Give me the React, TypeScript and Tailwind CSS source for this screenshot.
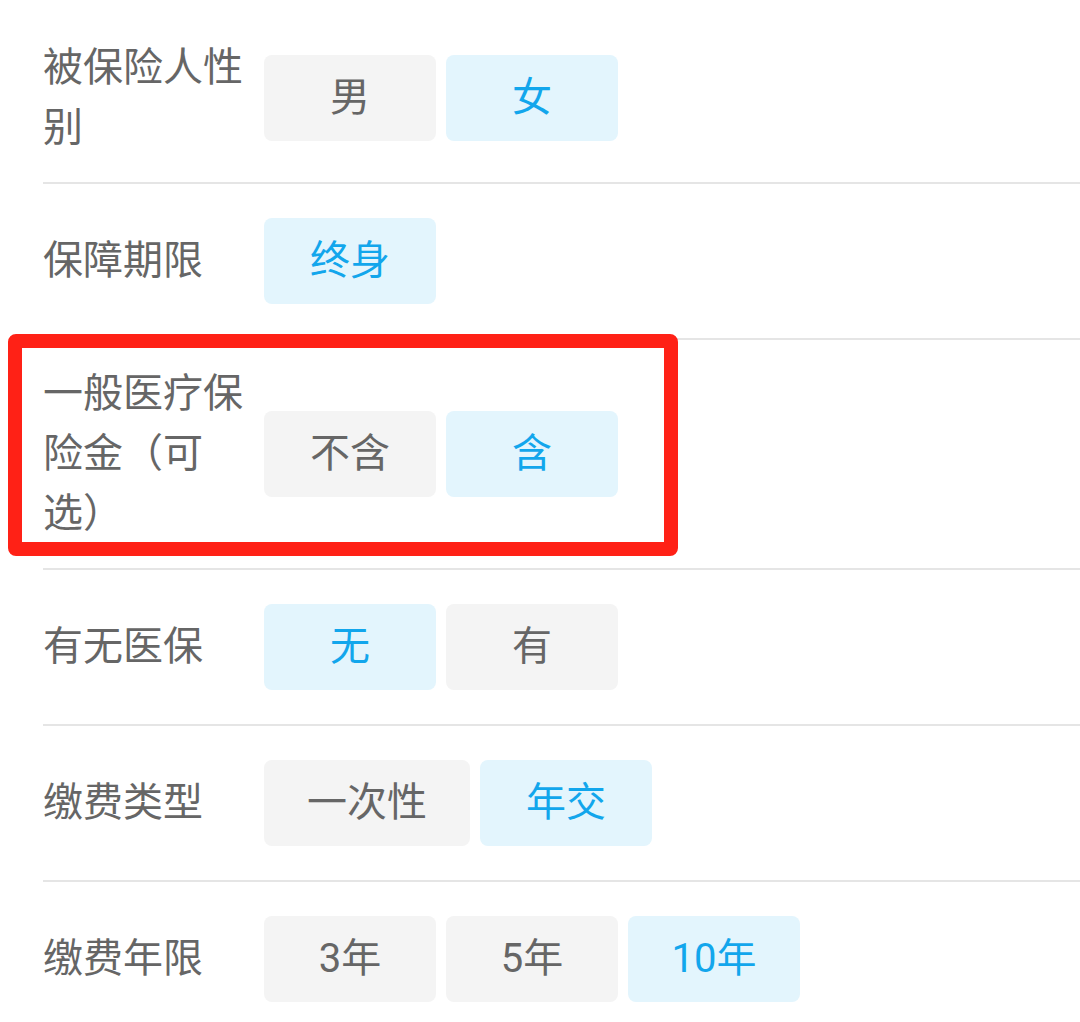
import React from "react";

type Row = { label: string; options: string[]; selected: number };

const rows: Row[] = [
  { label: "被保险人性别", options: ["男", "女"], selected: 1 },
  { label: "保障期限", options: ["终身"], selected: 0 },
  { label: "一般医疗保险金（可选）", options: ["不含", "含"], selected: 1 },
  { label: "有无医保", options: ["无", "有"], selected: 0 },
  { label: "缴费类型", options: ["一次性", "年交"], selected: 1 },
  { label: "缴费年限", options: ["3年", "5年", "10年"], selected: 2 },
];

export default function App() {
  return (
    <div
      className="relative w-[1080px] h-[1022px] overflow-hidden bg-white pt-[14px]"
      style={{ fontFamily: '"Roboto", "Noto Sans CJK SC", sans-serif' }}
    >
      {rows.map((row, i) => (
        <div key={i}>
          {i > 0 && <div className="ml-[43px] h-[2px] bg-[#e5e5e5]" />}
          <div className="flex items-center pl-[43px] py-[24px]">
            <div className="w-[201px] mr-[20px] shrink-0 text-[40px] leading-[60px] text-[#666666]">
              {row.label}
            </div>
            <div className="flex gap-[10px] my-[10px]">
              {row.options.map((opt, j) => (
                <div
                  key={j}
                  className={
                    j === row.selected
                      ? "h-[86px] min-w-[172px] px-[43px] flex items-center justify-center rounded-[8px] bg-[#e3f5fd] text-[#12a6ec] text-[40px]"
                      : "h-[86px] min-w-[172px] px-[43px] flex items-center justify-center rounded-[8px] bg-[#f4f4f4] text-[#666666] text-[40px]"
                  }
                >
                  {opt}
                </div>
              ))}
            </div>
          </div>
        </div>
      ))}
      <div className="absolute left-[8px] top-[334px] w-[670px] h-[222px] rounded-[8px] border-[14px] border-[#ff2116]" />
    </div>
  );
}
